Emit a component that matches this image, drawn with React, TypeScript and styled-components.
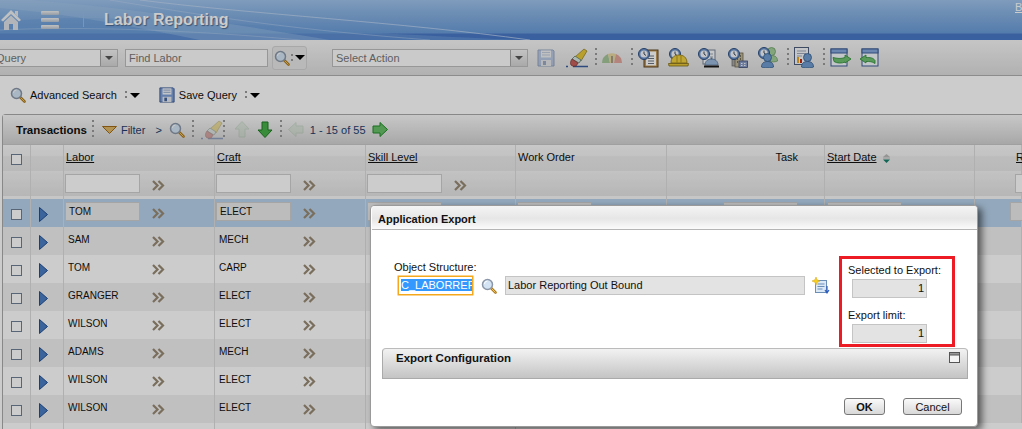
import React from 'react';
import styled, { createGlobalStyle } from 'styled-components';

const GlobalStyle = createGlobalStyle`
html, body {
    margin: 0;
    padding: 0;
    width: 1022px;
    height: 429px;
    overflow: hidden;
    background: #fff;
}
body {
    font-family: "Liberation Sans", Arial, sans-serif;
    font-size: 11px;
    color: #000;
}
`;

const COLUMNS = '28px 33px 151px 151px 150px 151px 158px 150px 1fr';

const Page = styled.div`
position: relative;
width: 1022px;
height: 429px;
overflow: hidden;
background: #fff;
`;
const Banner = styled.header`
position: relative;
height: 40px;
display: flex;
align-items: center;
overflow: hidden;
background: linear-gradient(#a0c3ec 0, #8ab3e2 12px, #6a9cd8 33px, #4a78c6 34px, #4878c8 40px);
`;
const Swoosh = styled.svg`
position: absolute;
left: 0;
top: 0;
`;
const BannerItem = styled.div<{ $ml: number }>`
position: relative;
display: flex;
margin-left: ${p => p.$ml}px;
`;
const MenuBars = styled.div`
position: relative;
display: flex;
flex-direction: column;
gap: 3px;
width: 18px;
margin-left: 20px;
span {
    height: 4px;
    border-radius: 1px;
    background: linear-gradient(#f0f0f0, #b9c4d2);
}
`;
const BannerDivider = styled.div`
position: relative;
width: 1px;
height: 14px;
margin-left: 24px;
background: #9dbbe0;
`;
const PageTitle = styled.h1`
position: relative;
margin: 0 0 0 20px;
font-size: 16px;
font-weight: bold;
color: #fff;
text-shadow: 1px 1px 1px rgba(40, 60, 90, 0.6);
`;
const BulletinLink = styled.a`
position: absolute;
left: 1015px;
top: 1px;
color: #fff;
text-decoration: underline;
font-size: 11px;
`;
const Toolbar = styled.div`
height: 35px;
display: flex;
align-items: center;
background: linear-gradient(#f7f7f7, #dedede);
border-bottom: 1px solid #b0b0b0;
`;
const Combo = styled.div<{ $width: number; $ml: number }>`
display: flex;
width: ${p => p.$width}px;
height: 18px;
margin-left: ${p => p.$ml}px;
flex: none;
border: 1px solid #bdbdbd;
box-sizing: border-box;
background: #fdfdfd;
`;
const ComboText = styled.div`
flex: 1;
padding-left: 3px;
line-height: 16px;
font-size: 11px;
color: #777;
`;
const ComboButton = styled.div`
width: 16px;
display: flex;
align-items: center;
justify-content: center;
background: linear-gradient(#f4f4f4, #d4d4d4);
border-left: 1px solid #a8a8a8;
&::after {
    content: '';
    border-left: 4px solid transparent;
    border-right: 4px solid transparent;
    border-top: 4px solid #555;
}
`;
const SearchButton = styled.div`
display: flex;
align-items: center;
flex: none;
width: 35px;
height: 24px;
margin-left: 4px;
box-sizing: border-box;
padding-left: 1px;
border: 1px solid #d2d2d2;
border-radius: 3px;
background: #e8e8e8;
`;
const Caret = styled.span<{ $ml?: number }>`
flex: none;
margin-left: ${p => p.$ml ?? 3}px;
border-left: 5px solid transparent;
border-right: 5px solid transparent;
border-top: 5px solid #000;
`;
const DotRule = styled.span<{ $ml?: number; $height?: number }>`
flex: none;
width: 2px;
height: ${p => p.$height ?? 20}px;
margin-left: ${p => p.$ml ?? 0}px;
background: repeating-linear-gradient(#999 0, #999 2px, transparent 2px, transparent 5px);
`;
const ToolIcon = styled.span<{ $ml: number; $dim?: boolean }>`
display: flex;
flex: none;
margin-left: ${p => p.$ml}px;
opacity: ${p => (p.$dim ? 0.45 : 1)};
`;
const QueryBar = styled.div`
height: 38px;
display: flex;
align-items: center;
background: #fff;
font-size: 11px;
color: #111;
`;
const QueryLabel = styled.span`
margin-left: 4px;
`;
const Table = styled.section`
margin-left: 2px;
border-top: 1px solid #aaa;
border-left: 1px solid #aaa;
border-top-left-radius: 4px;
`;
const TableBar = styled.div`
height: 30px;
display: flex;
align-items: center;
background: linear-gradient(#fafafa, #d2d2d2);
border-bottom: 1px solid #c8c8c8;
box-sizing: border-box;
`;
const TableName = styled.strong`
margin-left: 13px;
font-size: 11.5px;
color: #111;
`;
const BarText = styled.span<{ $ml: number }>`
margin-left: ${p => p.$ml}px;
font-size: 11px;
color: #1c3f6e;
`;
const GridRow = styled.div<{ $height: number; $tone: string }>`
display: grid;
grid-template-columns: ${COLUMNS};
height: ${p => p.$height}px;
background: ${p => p.$tone};
`;
const Cell = styled.div<{ $right?: boolean; $pad?: number }>`
display: flex;
align-items: center;
justify-content: ${p => (p.$right ? 'flex-end' : 'flex-start')};
box-sizing: border-box;
min-width: 0;
padding-left: ${p => p.$pad ?? 1}px;
padding-right: ${p => (p.$right ? 26 : 0)}px;
border-right: 1px solid #dcdcdc;
font-size: 11px;
`;
const IconCell = styled(Cell)`
justify-content: center;
padding: 2px 0 0;
`;
const ArrowCell = styled(Cell)`
padding: 2px 0 0 8px;
`;
const HeadLink = styled.span<{ $plain?: boolean }>`
text-decoration: ${p => (p.$plain ? 'none' : 'underline')};
color: #111;
padding-left: 1px;
margin-top: -2px;
`;
const Check = styled.span`
width: 9px;
height: 9px;
border: 1px solid #6d7f94;
background: #fff;
`;
const CellText = styled.span`
width: 75px;
flex: none;
box-sizing: border-box;
padding-left: 3px;
margin-top: -3px;
font-size: 10px;
line-height: 12px;
color: #111;
`;
const Field = styled.span<{ $fill?: string }>`
width: 75px;
height: 19px;
flex: none;
box-sizing: border-box;
padding-left: 3px;
margin-top: -3px;
border: 1px solid #cfcfcf;
background: ${p => p.$fill ?? '#fff'};
font-size: 10px;
line-height: 17px;
color: #111;
`;
const ChevronSlot = styled.span`
display: flex;
margin-left: 12px;
`;
const Overlay = styled.div`
position: absolute;
inset: 0;
background: rgba(0, 0, 0, 0.2);
`;
const Dialog = styled.div`
position: absolute;
left: 370px;
top: 205px;
width: 608px;
height: 222px;
box-sizing: border-box;
display: flex;
flex-direction: column;
border: 1px solid #9a9a9a;
border-radius: 4px;
background: #fff;
box-shadow: 4px 3px 7px rgba(0, 0, 0, 0.55);
`;
const DialogTitle = styled.div`
height: 24px;
flex: none;
display: flex;
align-items: center;
box-sizing: border-box;
padding: 3px 0 0 6px;
margin: 0 0 0 1px;
border-bottom: 1px solid #b5b5b5;
border-radius: 3px 3px 0 0;
background: linear-gradient(#f4f4f4 0, #e6e6e6 55%, #fbfbfb 100%);
font-size: 11px;
font-weight: bold;
color: #111;
`;
const DialogBody = styled.div`
display: flex;
align-items: flex-start;
height: 118px;
flex: none;
padding-top: 26px;
box-sizing: border-box;
`;
const ObjectGroup = styled.div`
width: 468px;
flex: none;
padding: 5px 0 0 23px;
box-sizing: border-box;
`;
const FieldLabel = styled.div`
font-size: 11px;
line-height: 13px;
color: #111;
`;
const ObjectRow = styled.div`
display: flex;
align-items: center;
margin: 2px 0 0 4px;
`;
const FocusBox = styled.div`
width: 75px;
height: 19px;
box-sizing: border-box;
padding: 1px 2px;
border: 1px solid #f5a81c;
box-shadow: 0 0 0 0.5px #f5a81c;
overflow: hidden;
white-space: nowrap;
font-size: 11px;
line-height: 15px;
span {
    background: #3399ff;
    color: #fff;
}
`;
const ReadOnly = styled.div<{ $width: number; $ml?: number; $right?: boolean }>`
width: ${p => p.$width}px;
height: 19px;
flex: none;
box-sizing: border-box;
margin-left: ${p => p.$ml ?? 0}px;
padding: 0 2px;
border: 1px solid #c4c4c4;
background: #e3e3e3;
text-align: ${p => (p.$right ? 'right' : 'left')};
font-size: 11px;
line-height: 17px;
color: #111;
`;
const ExportBox = styled.div`
width: 116px;
height: 91px;
flex: none;
box-sizing: border-box;
padding: 5px 0 0 6px;
border: 3px solid #ed1c24;
`;
const ExportField = styled(ReadOnly)`
margin: 2px 0 11px 4px;
`;
const ConfigPanel = styled.div`
width: 586px;
height: 31px;
flex: none;
box-sizing: border-box;
margin-left: 11px;
padding: 3px 7px 0 13px;
display: flex;
justify-content: space-between;
border: 1px solid #aaa;
border-top-color: #bbb;
border-radius: 4px 4px 0 0;
background: linear-gradient(#f2f2f2, #c4c4c4);
`;
const ConfigName = styled.strong`
font-size: 11.5px;
color: #111;
`;
const DialogFooter = styled.div`
display: flex;
justify-content: flex-end;
gap: 18px;
margin-top: 19px;
padding-right: 15px;
`;
const DialogButton = styled.button<{ $width: number; $bold?: boolean }>`
width: ${p => p.$width}px;
height: 17px;
padding: 0;
border: 1px solid #777;
border-radius: 3px;
background: linear-gradient(#fafafa, #d8d8d8);
font-family: inherit;
font-size: 11px;
font-weight: ${p => (p.$bold ? 'bold' : 'normal')};
color: #111;
`;

const Search = ({ size = 16 }: { size?: number }) => (
    <svg width={size} height={size} viewBox="0 0 16 16">
        <path d="M10 10l4.5 4.5" stroke="#b07a1e" strokeWidth="2.6" strokeLinecap="round" />
        <path d="M10.5 10.5l4 4" stroke="#f0c860" strokeWidth="1" />
        <circle cx="6.5" cy="6.5" r="5" fill="#d4e4f4" stroke="#8b97a8" strokeWidth="1.5" />
        <path d="M3.5 6a3 3 0 0 1 3-3" fill="none" stroke="#fff" strokeWidth="1" />
    </svg>
);
const Floppy = ({ size = 18 }: { size?: number }) => (
    <svg width={size} height={size} viewBox="0 0 18 18">
        <path d="M1 1h15l1 1v15H1z" fill="#7f9fd8" stroke="#34558f" />
        <rect x="4" y="1.5" width="10" height="7" fill="#f2f5fa" />
        <path d="M5 3.5h8M5 6h8" stroke="#8ea4c8" />
        <rect x="4" y="11" width="10" height="6" fill="#e4e8ee" />
        <rect x="6" y="12" width="3" height="4" fill="#44639a" />
    </svg>
);
const Eraser = () => (
    <svg width="22" height="20" viewBox="0 0 22 20">
        <path d="M0 18.5h2M7 18.5h15" stroke="#3a5c9e" strokeWidth="1.4" />
        <path d="M9 9L18 1l3 2-6 10z" fill="#e8c838" stroke="#8d7a1c" strokeWidth=".7" />
        <path d="M6 11l3-3 6 4-2 3z" fill="#d8e6e0" stroke="#4f6e60" strokeWidth=".7" />
        <path d="M6 11l6 4-1.5 2.5c-1.5 1-4 1-5.500-.5-1-1.500-.5-4 1-6z" fill="#c9605a" stroke="#7c3432" strokeWidth=".7" />
    </svg>
);
const Gauge = () => (
    <svg width="20" height="12" viewBox="0 0 20 12">
        <path d="M0 11A10 10 0 0 1 6 2l2 9z" fill="#a6c69c" />
        <path d="M6 2a10 10 0 0 1 8 0l-2 9H8z" fill="#e6d8a0" />
        <path d="M14 2a10 10 0 0 1 6 9h-8z" fill="#e2a49a" />
        <path d="M10 11V4" stroke="#777" strokeWidth="1.200" />
    </svg>
);
const Clock = ({ x = 0, y = 0 }: { x?: number; y?: number }) => (
    <g transform={`translate(${x} ${y})`}>
        <circle cx="6" cy="6" r="5.500" fill="#6f95cc" stroke="#2e4f80" />
        <circle cx="6" cy="6" r="3.600" fill="#f4f7fb" />
        <path d="M6 3.500V6l2 1.500" fill="none" stroke="#28364a" strokeWidth=".9" />
    </g>
);
const Person = ({ x = 0, y = 0, body = '#6f9bd0', edge = '#35608f' }: { x?: number; y?: number; body?: string; edge?: string }) => (
    <g transform={`translate(${x} ${y})`}>
        <path d="M.5 14c0-4 2.500-5.500 6-5.500s6 1.500 6 5.500c-1.500 1.200-10.500 1.200-12 0z" fill={body} stroke={edge} strokeWidth=".8" />
        <circle cx="6.500" cy="4.500" r="4" fill={body} stroke={edge} strokeWidth=".8" />
    </g>
);
const ClockClipboard = () => (
    <svg width="21" height="20" viewBox="0 0 21 20">
        <rect x="6" y="2" width="14" height="17" fill="#c49a5a" stroke="#5e4522" />
        <rect x="8" y="3.500" width="10" height="14" fill="#fff" />
        <path d="M10 8h6M10 10.500h6M10 13h6M10 15.500h6" stroke="#6c7480" />
        <Clock />
    </svg>
);
const HardHat = () => (
    <svg width="21" height="20" viewBox="0 0 21 20">
        <Clock x={1} />
        <path d="M3 15C3 9 7 7 11 7s8 2 8 8z" fill="#f0d040" stroke="#8a7416" strokeWidth=".8" />
        <path d="M9 15V8M13 15V8" stroke="#b09820" strokeWidth="1" />
        <path d="M.5 15.500h20L20 18H1z" fill="#e6c436" stroke="#7e6a14" strokeWidth=".8" />
    </svg>
);
const ClockBell = () => (
    <svg width="21" height="20" viewBox="0 0 21 20">
        <rect x="5" y="2" width="12" height="14" fill="#f6f8fa" stroke="#7a8698" />
        <path d="M11 6h4M12 9h3" stroke="#9aa4b2" />
        <Clock />
        <path d="M7 17c0-4 3-6 6.500-6S20 13 20 17z" fill="#9db9dc" stroke="#5e7a9e" strokeWidth=".8" />
        <path d="M6 17.500h15v2H6z" fill="#1a1a1a" />
        <circle cx="13.500" cy="10.500" r="1" fill="#5e7a9e" />
    </svg>
);
const ClockBuilding = () => (
    <svg width="20" height="20" viewBox="0 0 20 20">
        <rect x="4" y="6" width="5" height="12" fill="#a8a8a8" stroke="#666" strokeWidth=".7" />
        <rect x="7" y="5" width="8" height="14" fill="#c2b898" stroke="#6c6450" strokeWidth=".8" />
        <path d="M9 8h1M12 8h1M9 11h1M12 11h1M9 14h1M12 14h1" stroke="#5c5440" strokeWidth="1.400" />
        <rect x="11" y="13" width="8.500" height="6.500" fill="#8a9cc6" stroke="#404f78" strokeWidth=".8" />
        <path d="M13 15.500h1.500M16 15.500h1.500M13 17.500h1.500M16 17.500h1.500" stroke="#f0f4fa" />
        <Clock />
    </svg>
);
const ClockPeople = () => (
    <svg width="20" height="21" viewBox="0 0 20 21">
        <Person x={7} y={0} body="#a4cf9c" edge="#6c9a66" />
        <Clock />
        <Person x={3} y={6} />
    </svg>
);
const ReportUser = () => (
    <svg width="20" height="21" viewBox="0 0 20 21">
        <rect x=".5" y=".5" width="14" height="17" fill="#f6f8fb" stroke="#4e5e7c" />
        <path d="M3 4h9M3 6.500h9M3 9h5" stroke="#a0a8b8" />
        <rect x="3" y="10" width="2" height="6" fill="#e8a820" />
        <rect x="6" y="12" width="2" height="4" fill="#c02818" />
        <Person x={7} y={6} />
    </svg>
);
const ExportWindow = ({ flip }: { flip?: boolean }) => (
    <svg width="21" height="19" viewBox="0 0 21 19">
        <g transform={flip ? 'translate(21 0) scale(-1 1)' : undefined}>
            <rect x={flip ? 3 : 1} y="1" width="16" height="17" fill="#f4f8fc" stroke="#3c5c96" />
            <rect x={flip ? 3 : 1} y="1" width="16" height="4" fill="#86a8dc" stroke="#3c5c96" />
        </g>
        <path
            d={flip ? 'M0 11l6-4v2.500c4 0 7 0 9 3v3c-3-2-5-2-9-2V15z' : 'M21 11l-6-4v2.500c-4 1.500-8 1-12 0l1 4c3 2 8 2 11 .5V15z'}
            fill="#70c070"
            stroke="#2a8a34"
            strokeWidth=".8"
        />
    </svg>
);
const ConfigIcon = () => (
    <svg width="18" height="18" viewBox="0 0 18 18">
        <rect x="3.500" y="3.500" width="11" height="12" fill="#dbe8f6" stroke="#6c8fb8" />
        <path d="M5.500 7h7M5.500 9.500h7M5.500 12h5" stroke="#6c8fb8" />
        <path d="M15 9v6M13 13l2 3 2-3" fill="none" stroke="#2a5cc0" strokeWidth="1.200" />
        <path d="M4 0l1 2.700L8 4 5 5.300 4 8 3 5.300 0 4l3-1.300z" fill="#f6d020" stroke="#d4a010" strokeWidth=".5" />
    </svg>
);
const Home = () => (
    <svg width="20" height="22" viewBox="0 0 20 22">
        <path d="M0 11L10 1l10 10-2 1.500L10 5l-8 7.500z" fill="#eef0f2" />
        <path d="M14 2h3v6l-3-3z" fill="#e4e7ea" />
        <path d="M3 13l7-6.500 7 6.500v8h-5v-6H8v6H3z" fill="#dfe3e8" />
    </svg>
);
const FilterFunnel = () => (
    <svg width="15" height="8" viewBox="0 0 15 8">
        <path d="M.5.500h14L7.500 7.500z" fill="#e0b868" stroke="#a06a18" />
    </svg>
);
const ArrowV = ({ up, dim }: { up?: boolean; dim?: boolean }) => (
    <svg width="16" height="17" viewBox="0 0 16 17" style={{ opacity: dim ? 0.3 : 1 }}>
        <path
            d={up ? 'M8 .5L15 8h-4v8H5V8H1z' : 'M8 16.500L15 9h-4V1H5v8H1z'}
            fill={up ? '#b8d8b8' : '#48b048'}
            stroke={up ? '#88b088' : '#1e7a24'}
        />
    </svg>
);
const ArrowH = ({ left, dim }: { left?: boolean; dim?: boolean }) => (
    <svg width="16" height="15" viewBox="0 0 16 15" style={{ opacity: dim ? 0.3 : 1 }}>
        <path
            d={left ? 'M.5 7.500L8 .5V4h7v7H8v3.500z' : 'M15.500 7.500L8 .5V4H1v7h7v3.500z'}
            fill={left ? '#b8d8b8' : '#68c068'}
            stroke={left ? '#88b088' : '#1e8a28'}
        />
    </svg>
);
const Chevrons = () => (
    <svg width="13" height="11" viewBox="0 0 13 11">
        <path d="M1 1l4.500 4.500L1 10M6.500 1L11 5.500 6.500 10" fill="none" stroke="#998a74" strokeWidth="2.200" />
    </svg>
);
const RowArrow = () => (
    <svg width="9" height="15" viewBox="0 0 9 15">
        <path d="M.5.500L8.500 7.500.5 14.500z" fill="#4a7cc4" stroke="#234f8e" />
    </svg>
);
const SortMark = () => (
    <svg width="9" height="9" viewBox="0 0 9 9" style={{ marginLeft: 5 }}>
        <path d="M4.500 0L8 3H1z" fill="#bbb" />
        <path d="M1 4h7" stroke="#bbb" />
        <path d="M1 5.500h7L4.500 9z" fill="#16806c" />
    </svg>
);
const Restore = () => (
    <svg width="11" height="11" viewBox="0 0 11 11">
        <rect x=".5" y=".5" width="10" height="10" fill="#f4f4f4" stroke="#555" />
        <rect x=".5" y=".5" width="10" height="2.500" fill="#999" stroke="#555" />
    </svg>
);

const ROWS = [
    ['TOM', 'MECH'],
].slice(1);
const LABOR_ROWS: [string, string][] = [
    ['SAM', 'MECH'],
    ['TOM', 'CARP'],
    ['GRANGER', 'ELECT'],
    ['WILSON', 'ELECT'],
    ['ADAMS', 'MECH'],
    ['WILSON', 'ELECT'],
    ['WILSON', 'ELECT'],
];
const ROW_LIGHT = '#ffffff';
const ROW_DARK = '#f0f0f0';
const ROW_SELECTED = '#b8d2ec';

const App = () => {
    return (
        <>
            <GlobalStyle />
            <Page>
                <Banner>
                    <Swoosh width="1022" height="40" viewBox="0 0 1022 40">
                        <path d="M0 22C120 10 240 28 520 40H0z" fill="#6e9fd8" opacity=".55" />
                        <path d="M30 0C130 8 220 22 330 40H200C130 26 70 14 0 8V0z" fill="#b0cdee" opacity=".35" />
                        <path d="M140 0C250 14 400 22 530 40" fill="none" stroke="#c8dcf4" strokeWidth="1" opacity=".7" />
                        <path d="M110 0C230 20 300 30 430 40" fill="none" stroke="#c8dcf4" strokeWidth="1" opacity=".4" />
                        <path d="M0 30C80 26 190 30 300 40" fill="none" stroke="#c8dcf4" strokeWidth="1" opacity=".35" />
                    </Swoosh>
                    <BannerItem $ml={1}><Home /></BannerItem>
                    <MenuBars><span /><span /><span /></MenuBars>
                    <BannerDivider />
                    <PageTitle>Labor Reporting</PageTitle>
                    <BulletinLink>B</BulletinLink>
                </Banner>
                <Toolbar>
                    <Combo $width={126} $ml={-8}>
                        <ComboText>Query</ComboText>
                        <ComboButton />
                    </Combo>
                    <Combo $width={143} $ml={7}>
                        <ComboText>Find Labor</ComboText>
                    </Combo>
                    <SearchButton>
                        <Search />
                        <DotRule $height={8} $ml={1} />
                        <Caret $ml={2} />
                    </SearchButton>
                    <Combo $width={196} $ml={25}>
                        <ComboText>Select Action</ComboText>
                        <ComboButton />
                    </Combo>
                    <ToolIcon $ml={9} $dim><Floppy /></ToolIcon>
                    <ToolIcon $ml={11}><Eraser /></ToolIcon>
                    <DotRule $ml={7} />
                    <ToolIcon $ml={5}><Gauge /></ToolIcon>
                    <DotRule $ml={9} />
                    <ToolIcon $ml={5}><ClockClipboard /></ToolIcon>
                    <ToolIcon $ml={9}><HardHat /></ToolIcon>
                    <ToolIcon $ml={9}><ClockBell /></ToolIcon>
                    <ToolIcon $ml={9}><ClockBuilding /></ToolIcon>
                    <ToolIcon $ml={10}><ClockPeople /></ToolIcon>
                    <DotRule $ml={9} />
                    <ToolIcon $ml={5}><ReportUser /></ToolIcon>
                    <DotRule $ml={9} />
                    <ToolIcon $ml={5}><ExportWindow /></ToolIcon>
                    <ToolIcon $ml={9}><ExportWindow flip /></ToolIcon>
                </Toolbar>
                <QueryBar>
                    <ToolIcon $ml={10}><Search /></ToolIcon>
                    <QueryLabel>Advanced Search</QueryLabel>
                    <DotRule $ml={8} $height={8} />
                    <Caret />
                    <ToolIcon $ml={19}><Floppy size={16} /></ToolIcon>
                    <QueryLabel>Save Query</QueryLabel>
                    <DotRule $ml={8} $height={8} />
                    <Caret />
                </QueryBar>
                <Table>
                    <TableBar>
                        <TableName>Transactions</TableName>
                        <DotRule $ml={5} />
                        <ToolIcon $ml={8}><FilterFunnel /></ToolIcon>
                        <BarText $ml={4}>Filter</BarText>
                        <BarText $ml={10}>&gt;</BarText>
                        <ToolIcon $ml={7}><Search /></ToolIcon>
                        <DotRule $ml={7} />
                        <ToolIcon $ml={7} $dim><Eraser /></ToolIcon>
                        <DotRule $ml={0} />
                        <ToolIcon $ml={9}><ArrowV up dim /></ToolIcon>
                        <ToolIcon $ml={7}><ArrowV /></ToolIcon>
                        <DotRule $ml={7} />
                        <ToolIcon $ml={6}><ArrowH left dim /></ToolIcon>
                        <BarText $ml={6}>1 - 15 of 55</BarText>
                        <ToolIcon $ml={6}><ArrowH /></ToolIcon>
                    </TableBar>
                    <GridRow $height={26} $tone="linear-gradient(#fafafa, #f4f4f4 40%, #ececec 45%, #e8e8e8)">
                        <IconCell><Check /></IconCell>
                        <Cell />
                        <Cell><HeadLink>Labor</HeadLink></Cell>
                        <Cell><HeadLink>Craft</HeadLink></Cell>
                        <Cell><HeadLink>Skill Level</HeadLink></Cell>
                        <Cell><HeadLink $plain>Work Order</HeadLink></Cell>
                        <Cell $right><HeadLink $plain>Task</HeadLink></Cell>
                        <Cell><HeadLink>Start Date</HeadLink><SortMark /></Cell>
                        <Cell $pad={40}><HeadLink>Rep</HeadLink></Cell>
                    </GridRow>
                    <GridRow $height={28} $tone="linear-gradient(#f4f4f4, #e4e4e4 90%, #f8f8f8 90%)">
                        <Cell />
                        <Cell />
                        <Cell><Field /><ChevronSlot><Chevrons /></ChevronSlot></Cell>
                        <Cell><Field /><ChevronSlot><Chevrons /></ChevronSlot></Cell>
                        <Cell><Field /><ChevronSlot><Chevrons /></ChevronSlot></Cell>
                        <Cell />
                        <Cell />
                        <Cell />
                        <Cell $pad={40}><Field /></Cell>
                    </GridRow>
                    <GridRow $height={28} $tone={ROW_SELECTED}>
                        <IconCell><Check /></IconCell>
                        <ArrowCell><RowArrow /></ArrowCell>
                        <Cell><Field $fill="#ebebeb">TOM</Field><ChevronSlot><Chevrons /></ChevronSlot></Cell>
                        <Cell><Field $fill="#ebebeb">ELECT</Field><ChevronSlot><Chevrons /></ChevronSlot></Cell>
                        <Cell><Field $fill="#ebebeb" /></Cell>
                        <Cell><Field $fill="#ebebeb" /></Cell>
                        <Cell $right><Field $fill="#ebebeb" /></Cell>
                        <Cell $pad={2}><Field $fill="#ebebeb" /></Cell>
                        <Cell $pad={35}><Field $fill="#ebebeb" /></Cell>
                    </GridRow>
                    {LABOR_ROWS.map(([labor, craft], i) => (
                        <GridRow key={i} $height={28} $tone={i % 2 === 0 ? ROW_DARK : ROW_LIGHT}>
                            <IconCell><Check /></IconCell>
                            <ArrowCell><RowArrow /></ArrowCell>
                            <Cell><CellText>{labor}</CellText><ChevronSlot><Chevrons /></ChevronSlot></Cell>
                            <Cell><CellText>{craft}</CellText><ChevronSlot><Chevrons /></ChevronSlot></Cell>
                            <Cell />
                            <Cell />
                            <Cell />
                            <Cell />
                            <Cell />
                        </GridRow>
                    ))}
                    <GridRow $height={28} $tone={ROW_LIGHT}>
                        {ROWS.map(r => <Cell key={r[0]} />)}
                        <Cell /><Cell /><Cell /><Cell /><Cell />
                    </GridRow>
                </Table>
                <Overlay />
                <Dialog>
                    <DialogTitle>Application Export</DialogTitle>
                    <DialogBody>
                        <ObjectGroup>
                            <FieldLabel>Object Structure:</FieldLabel>
                            <ObjectRow>
                                <FocusBox><span>C_LABORREP</span></FocusBox>
                                <ToolIcon $ml={8}><Search /></ToolIcon>
                                <ReadOnly $width={300} $ml={8}>Labor Reporting Out Bound</ReadOnly>
                                <ToolIcon $ml={7}><ConfigIcon /></ToolIcon>
                            </ObjectRow>
                        </ObjectGroup>
                        <ExportBox>
                            <FieldLabel>Selected to Export:</FieldLabel>
                            <ExportField $width={75} $right>1</ExportField>
                            <FieldLabel>Export limit:</FieldLabel>
                            <ExportField $width={75} $right>1</ExportField>
                        </ExportBox>
                    </DialogBody>
                    <ConfigPanel>
                        <ConfigName>Export Configuration</ConfigName>
                        <Restore />
                    </ConfigPanel>
                    <DialogFooter>
                        <DialogButton $width={41} $bold>OK</DialogButton>
                        <DialogButton $width={59}>Cancel</DialogButton>
                    </DialogFooter>
                </Dialog>
            </Page>
        </>
    );
};

export default App;
